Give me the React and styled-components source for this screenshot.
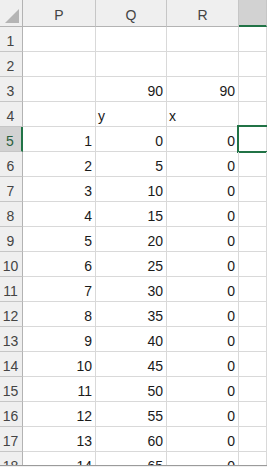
import React from "react";
import styled, { createGlobalStyle, css } from "styled-components";

const Global = createGlobalStyle`
  html, body { margin: 0; padding: 0; background: #ffffff; }
  body { font-family: "Liberation Sans", Arial, sans-serif; overflow: hidden; }
`;

const Window = styled.div`
  width: 267px;
  height: 467px;
  display: flex;
  flex-direction: column;
  overflow: hidden;
`;

const Sheet = styled.div`
  height: 465px;
  overflow: hidden;
  display: grid;
  grid-template-columns: 23px 73px 71px 72px 1fr;
  grid-auto-rows: 25px;
  grid-template-rows: 27px;
  font-size: 14px;
  line-height: 14px;
`;

const BottomEdge = styled.div`
  height: 2px;
  border-top: 1px solid #9b9b9b;
  box-sizing: border-box;
  background: #f0f0f0;
`;

const Corner = styled.div`
  position: relative;
  background: #efefef;
  border-right: 1px solid #b3b3b3;
  border-bottom: 1px solid #b3b3b3;
  box-sizing: border-box;
  svg { position: absolute; right: 3px; bottom: 3px; }
`;

const ColHead = styled.div`
  box-sizing: border-box;
  background: ${(p) => (p.$selected ? "#d2d2d2" : "#efefef")};
  border-right: 1px solid #c6c6c6;
  border-bottom: ${(p) => (p.$selected ? "2px solid #217346" : "1px solid #b3b3b3")};
  color: #444444;
  display: flex;
  align-items: center;
  justify-content: center;
  padding-top: ${(p) => (p.$selected ? "3px" : "4px")};
`;

const RowHead = styled.div`
  box-sizing: border-box;
  background: ${(p) => (p.$selected ? "#d2d2d2" : "#efefef")};
  border-right: ${(p) => (p.$selected ? "2px solid #217346" : "1px solid #b3b3b3")};
  border-bottom: 1px solid #c6c6c6;
  color: ${(p) => (p.$selected ? "#2a5f3c" : "#444444")};
  display: flex;
  align-items: flex-end;
  justify-content: center;
  padding-bottom: 3px;
  padding-right: 1px;
  white-space: nowrap;
  overflow: visible;
`;

const Cell = styled.div`
  position: relative;
  box-sizing: border-box;
  border-right: 1px solid #d9d9d9;
  border-bottom: 1px solid #d9d9d9;
  color: #1a1a1a;
  display: flex;
  align-items: flex-end;
  justify-content: ${(p) => (p.$text ? "flex-start" : "flex-end")};
  padding: 0 ${(p) => (p.$text ? "0" : "3px")} 3px ${(p) => (p.$text ? "2px" : "0")};
  white-space: nowrap;
  ${(p) =>
    p.$active &&
    css`
      &::after {
        content: "";
        position: absolute;
        left: -2px;
        top: -2px;
        right: -4px;
        bottom: -2px;
        border: 2px solid #217346;
        pointer-events: none;
      }
    `}
`;

const rows = [];
for (let r = 1; r <= 18; r++) {
  let p = "", q = "", rr = "", text = false;
  if (r === 3) { q = "90"; rr = "90"; }
  if (r === 4) { q = "y"; rr = "x"; text = true; }
  if (r >= 5) { p = String(r - 4); q = String((r - 5) * 5); rr = "0"; }
  rows.push({ r, p, q, rr, text });
}

export default function App() {
  return (
    <>
      <Global />
      <Window>
        <Sheet>
          <Corner>
            <svg width="14" height="14" viewBox="0 0 14 14">
              <polygon points="14,0 14,14 0,14" fill="#b4b4b4" />
            </svg>
          </Corner>
          <ColHead>P</ColHead>
          <ColHead>Q</ColHead>
          <ColHead>R</ColHead>
          <ColHead $selected />
          {rows.map((row) => (
            <React.Fragment key={row.r}>
              <RowHead $selected={row.r === 5}>{row.r}</RowHead>
              <Cell>{row.p}</Cell>
              <Cell $text={row.text}>{row.q}</Cell>
              <Cell $text={row.text}>{row.rr}</Cell>
              <Cell $active={row.r === 5} />
            </React.Fragment>
          ))}
        </Sheet>
        <BottomEdge />
      </Window>
    </>
  );
}
